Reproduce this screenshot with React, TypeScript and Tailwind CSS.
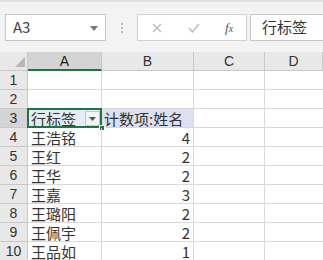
import React from "react";

const ROWS: { a: string; b: string }[] = [
  { a: "", b: "" },
  { a: "", b: "" },
  { a: "行标签", b: "计数项:姓名" },
  { a: "王浩铭", b: "4" },
  { a: "王红", b: "2" },
  { a: "王华", b: "2" },
  { a: "王嘉", b: "3" },
  { a: "王璐阳", b: "2" },
  { a: "王佩宇", b: "2" },
  { a: "王品如", b: "1" },
];

const font = { fontFamily: '"Noto Sans CJK SC", "Liberation Sans", sans-serif' };

function FilterButton() {
  return (
    <div className="absolute right-[1px] top-[2px] flex h-[15px] w-[15px] items-center justify-center border border-[#c8c8c8] bg-[#f4f4f4]">
      <svg width="7" height="4" viewBox="0 0 7 4">
        <path d="M0 0 L7 0 L3.5 4 Z" fill="#555" />
      </svg>
    </div>
  );
}

export default function App() {
  return (
    <div className="h-[260px] w-[323px] overflow-hidden bg-white text-[#333]" style={font}>
      {/* formula bar */}
      <div className="flex h-[52px] items-start border-t-2 border-[#e0e0e0] bg-[#f3f3f3] pl-[5px] pt-[12px]">
        <div className="relative flex h-[27px] w-[101px] items-center border border-[#c6c6c6] bg-white pl-[7px] text-[15px] text-[#444]">
          A3
          <svg className="absolute right-[7px] top-[11px]" width="8" height="5" viewBox="0 0 8 5">
            <path d="M0 0 L8 0 L4 5 Z" fill="#777" />
          </svg>
        </div>
        <div className="flex h-[27px] w-[31px] flex-col items-center justify-center gap-[2px]">
          <span className="h-[2px] w-[2px] bg-[#b8b8b8]" />
          <span className="h-[2px] w-[2px] bg-[#b8b8b8]" />
          <span className="h-[2px] w-[2px] bg-[#b8b8b8]" />
        </div>
        <div className="flex h-[27px] w-[110px] items-center border border-[#d0d0d0] bg-white">
          <svg className="ml-[14px]" width="10" height="10" viewBox="0 0 10 10">
            <path d="M1 1 L9 9 M9 1 L1 9" stroke="#c0c0c0" strokeWidth="1.6" />
          </svg>
          <svg className="ml-[26px]" width="12" height="10" viewBox="0 0 12 10">
            <path d="M1 5 L4.5 9 L11 1" stroke="#c0c0c0" strokeWidth="1.6" fill="none" />
          </svg>
          <span
            className="ml-[25px] text-[13px] italic text-[#555]"
            style={{ fontFamily: '"Liberation Serif", serif' }}
          >
            f<span className="text-[10px]">x</span>
          </span>
        </div>
        <div className="ml-[3px] flex h-[27px] flex-1 items-center border-y border-l border-[#c6c6c6] bg-white pl-[11px] text-[15px] text-[#333]">
          行标签
        </div>
      </div>

      {/* sheet */}
      <div className="grid grid-cols-[28px_74px_92px_71px_1fr] text-[15px]">
        {/* header row */}
        <div className="relative h-[19px] border-b border-r border-[#c8c8c8] bg-[#e8e8e8]">
          <svg className="absolute right-[2px] bottom-[3px]" width="10" height="10" viewBox="0 0 10 10">
            <path d="M10 0 L10 10 L0 10 Z" fill="#b6b6b6" />
          </svg>
        </div>
        <div className="flex h-[19px] items-center justify-center border-b-2 border-r border-b-[#217346] border-r-[#c8c8c8] bg-[#d4d4d4] text-[14px] leading-none text-[#222]" style={{ fontFamily: '"Liberation Sans", sans-serif' }}>
          A
        </div>
        {["B", "C", "D"].map((c) => (
          <div
            key={c}
            className="flex h-[19px] items-center justify-center border-b border-r border-[#c8c8c8] bg-[#e8e8e8] text-[14px] leading-none text-[#333]"
            style={{ fontFamily: '"Liberation Sans", sans-serif' }}
          >
            {c}
          </div>
        ))}

        {ROWS.map((r, i) => {
          const n = i + 1;
          const isHead = n === 3;
          return (
            <React.Fragment key={n}>
              <div
                className={`flex h-[19px] items-center justify-center border-b border-r border-[#c8c8c8] text-[14px] leading-none text-[#333] ${
                  isHead ? "bg-[#d4d4d4]" : "bg-[#e8e8e8]"
                }`}
                style={{ fontFamily: '"Liberation Sans", sans-serif' }}
              >
                {n}
              </div>
              <div
                className={`relative flex h-[19px] items-center border-b border-r border-[#d9d9d9] pl-[3px] leading-none ${
                  isHead ? "bg-[#e4ecf6]" : ""
                }`}
              >
                {r.a}
                {isHead && (
                  <>
                    <div className="absolute -left-[1px] -top-[1px] h-[20px] w-[75px] border-2 border-[#217346]" />
                    <FilterButton />
                    <div className="absolute -bottom-[4px] -right-[4px] h-[6px] w-[6px] border border-white bg-[#217346]" />
                  </>
                )}
              </div>
              <div
                className={`flex h-[19px] items-center border-b border-r border-[#d9d9d9] leading-none ${
                  isHead ? "bg-[#d9e1f2] pl-[2px]" : "justify-end pr-[3px]"
                }`}
              >
                {r.b}
              </div>
              <div className="h-[19px] border-b border-r border-[#d9d9d9]" />
              <div className="h-[19px] border-b border-[#d9d9d9]" />
            </React.Fragment>
          );
        })}
      </div>
    </div>
  );
}
